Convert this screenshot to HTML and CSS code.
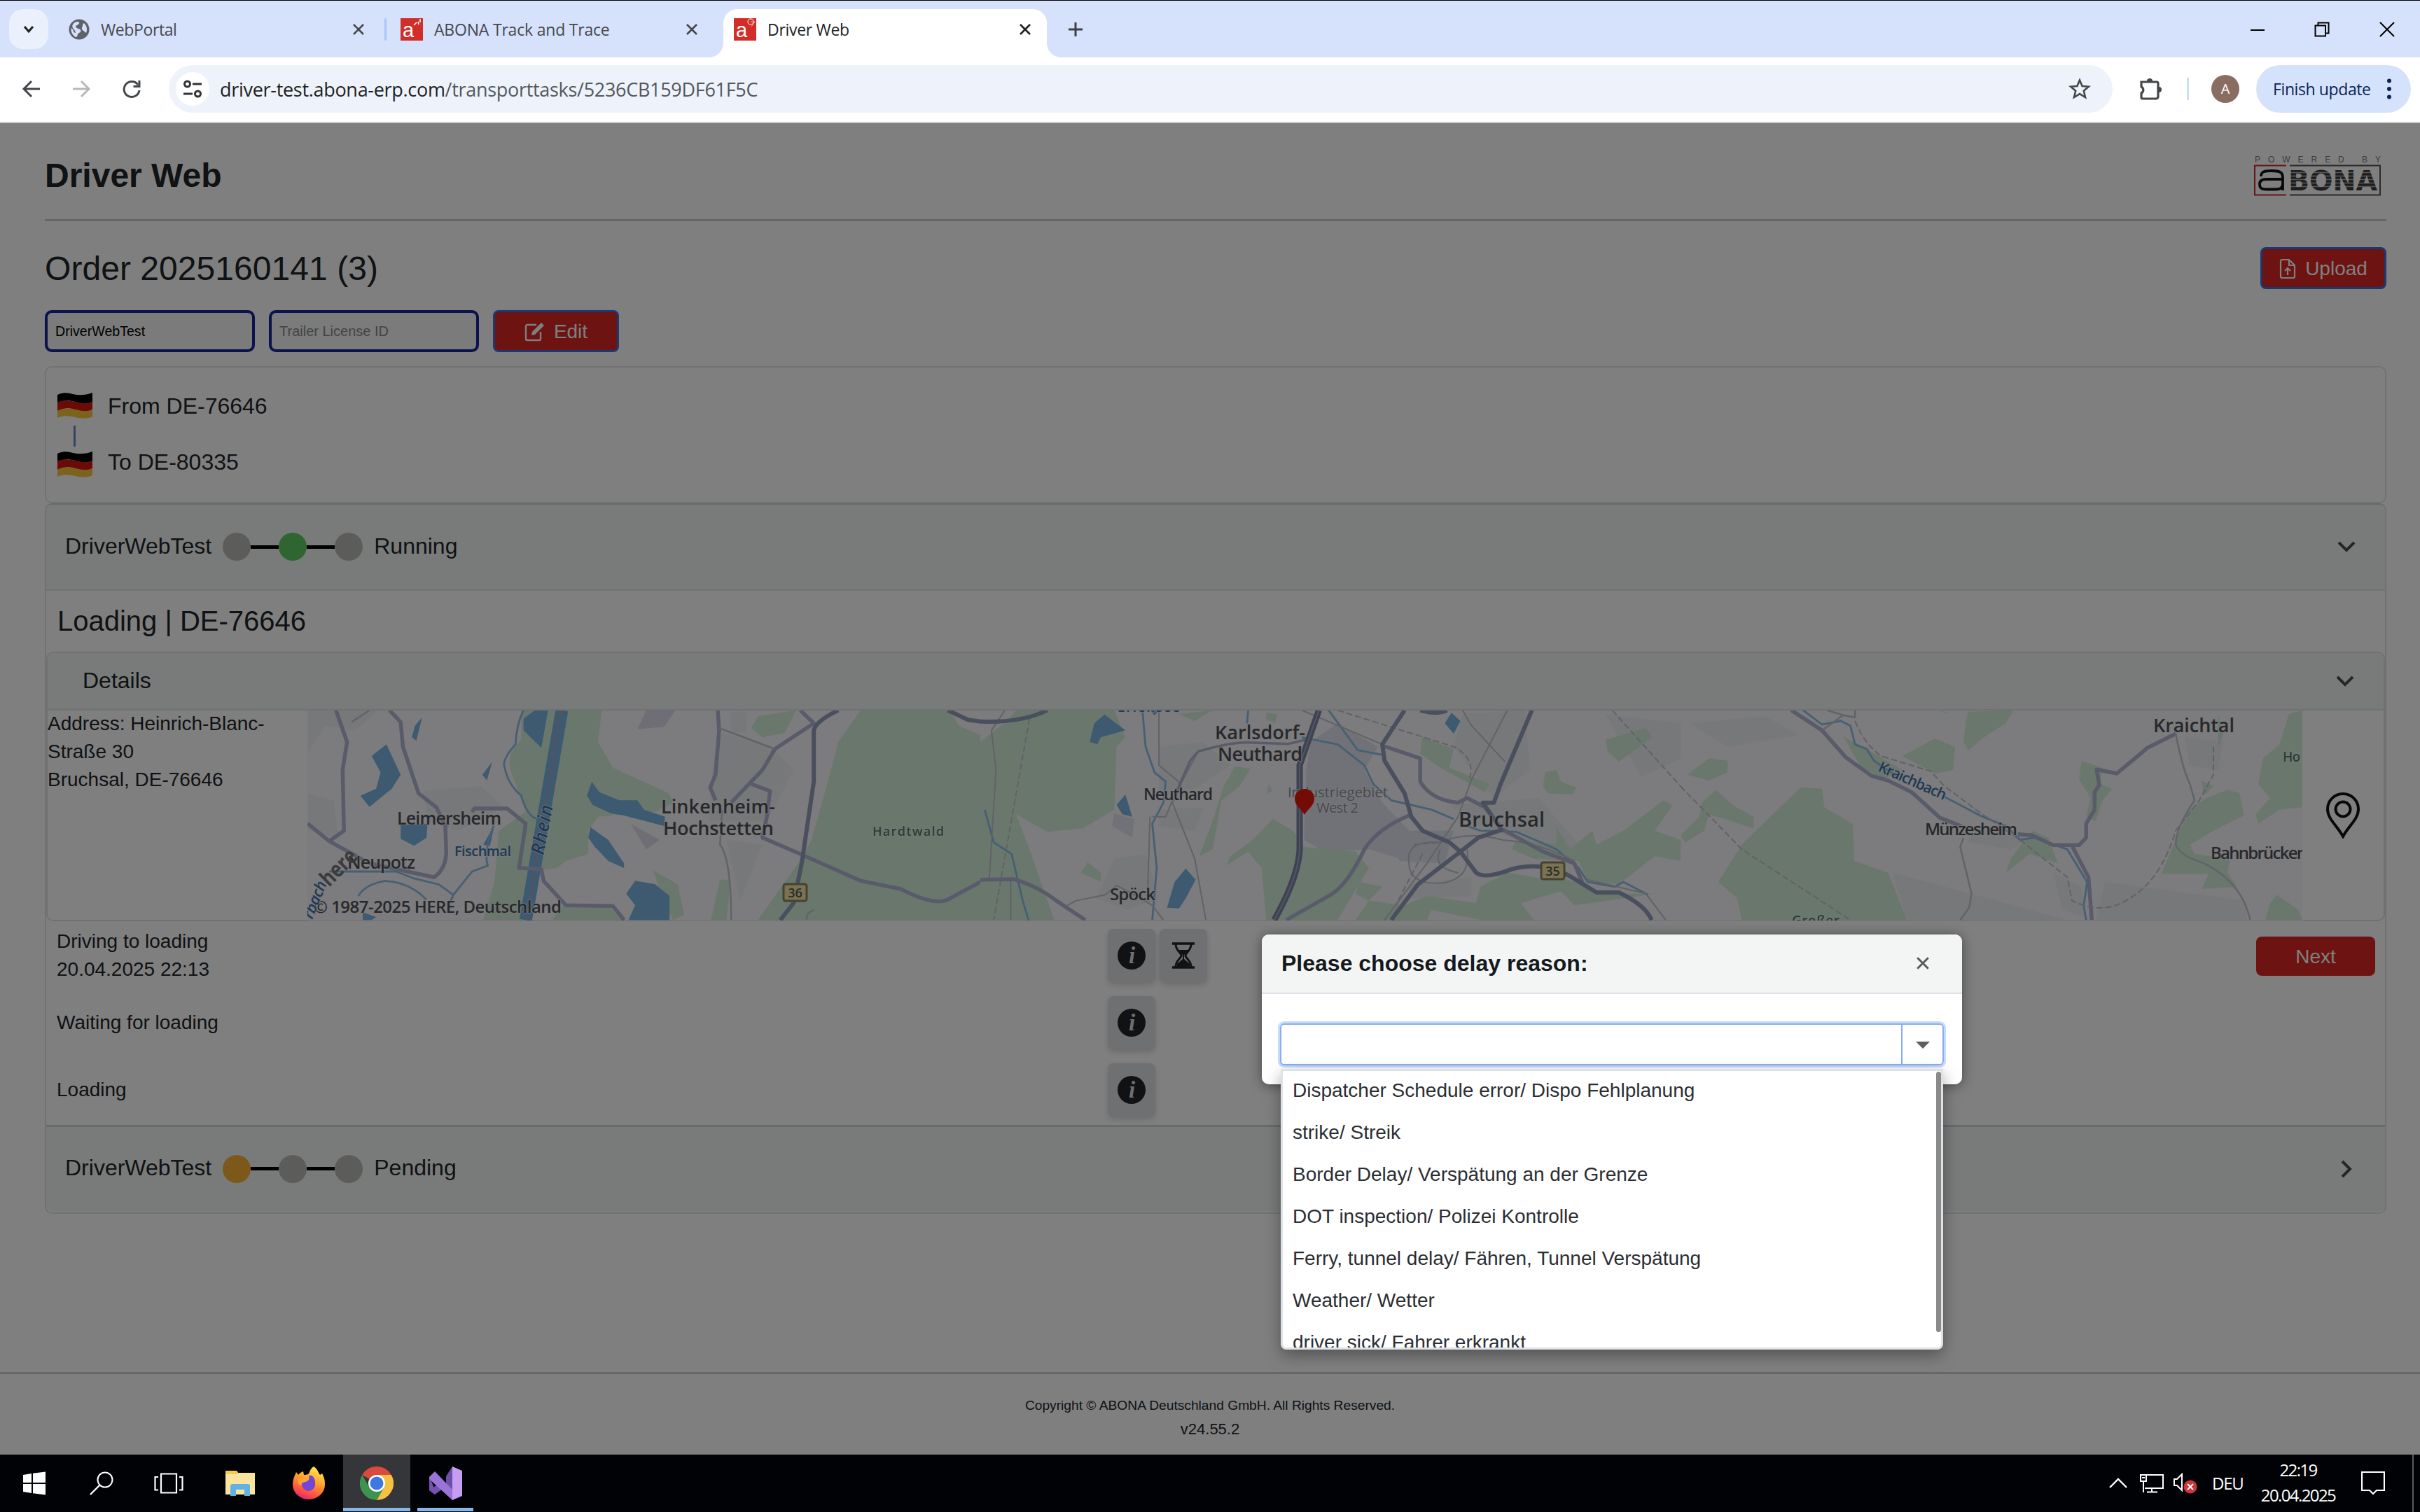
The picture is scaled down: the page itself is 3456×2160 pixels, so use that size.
FILE: index.html
```html
<!DOCTYPE html>
<html lang="en">
<head>
<meta charset="utf-8">
<title>Driver Web</title>
<link rel="stylesheet" href="styles.css">
</head>
<body>
<svg class="defs" width="0" height="0" aria-hidden="true">
  <defs>
    <symbol id="i-close" viewBox="0 0 18 18"><path d="M2 2L16 16M16 2L2 16" fill="none" stroke="currentColor" stroke-width="2.6"/></symbol>
    <symbol id="i-info" viewBox="0 0 40 40"><circle cx="20" cy="20" r="20" fill="#212529"/><text x="20.5" y="31" text-anchor="middle" font-family="Liberation Serif" font-style="italic" font-weight="bold" font-size="33" fill="#dcdee0">i</text></symbol>
    <symbol id="i-flag" viewBox="0 0 50 38">
      <path d="M0 4C8 0 14 1 22 3S40 5 50 1V14C42 18 34 17 25 14S8 12 0 15Z" fill="#000"/>
      <path d="M0 15C8 11 16 12 25 14S42 18 50 14V25C42 29 34 28 25 25S8 23 0 27Z" fill="#d6170f"/>
      <path d="M0 27C8 23 16 23 25 25S42 29 50 25V35C42 39 34 38 25 36S8 33 0 37Z" fill="#f7c63a"/>
    </symbol>
    <symbol id="i-down" viewBox="0 0 28 28"><path d="M3 8L14 19L25 8" fill="none" stroke="#4a4d50" stroke-width="4"/></symbol>
    <symbol id="i-right" viewBox="0 0 28 28"><path d="M8 3L19 14L8 25" fill="none" stroke="#4a4d50" stroke-width="4"/></symbol>
  </defs>
</svg>

<div class="browser">
  <div class="tabstrip">
    <div class="tabsearch"><svg width="16" height="12" viewBox="0 0 16 12"><path d="M2 2L8 9L14 2" fill="none" stroke="#1f1f1f" stroke-width="3"/></svg></div>
    <div class="tab tab-one">
      <svg width="30" height="30" viewBox="0 0 30 30"><circle cx="15" cy="15" r="14.5" fill="#5f6368"/><path d="M13 4C17 4 15 8 12 9S10 13 14 14S19 18 15 20S14 26 10 26C4 22 3 17 4 13C8 16 6 20 10 20C10 15 3 13 6 8C8 5 10 4 13 4ZM22 6C26 10 27 15 25 20C22 17 18 16 19 12C21 10 19 8 22 6Z" fill="#d6e1fb"/></svg>
      <span class="tab-title t1">WebPortal</span>
      <svg class="tab-x" width="18" height="18"><use href="#i-close"/></svg>
    </div>
    <div class="tab-sep"></div>
    <div class="tab tab-two">
      <span class="favicon">a<svg width="14" height="14" viewBox="0 0 14 14"><path d="M2 10L6 6M8 5L9 9M11 1V6" stroke="#fff" stroke-width="1.6"/></svg></span>
      <span class="tab-title t2">ABONA Track and Trace</span>
      <svg class="tab-x" width="18" height="18"><use href="#i-close"/></svg>
    </div>
    <div class="tab tab-three">
      <span class="favicon">a<svg width="14" height="14" viewBox="0 0 14 14"><circle cx="7" cy="5" r="4" fill="none" stroke="#f3b7b3" stroke-width="1.4"/><path d="M7 5L13 5L8 12" fill="none" stroke="#f3b7b3"/></svg></span>
      <span class="tab-title t3">Driver Web</span>
      <svg class="tab-x" width="18" height="18"><use href="#i-close"/></svg>
    </div>
    <svg class="newtab" width="22" height="22" viewBox="0 0 22 22"><path d="M11 1V21M1 11H21" stroke="#3c4043" stroke-width="3"/></svg>
    <div class="wincontrols">
      <svg width="20" height="22" viewBox="0 0 20 22"><path d="M0 12H20" stroke="#000" stroke-width="2"/></svg>
      <svg width="22" height="22" viewBox="0 0 22 22"><path d="M1.500 5.500H16V20.500H1.500ZM5.500 5V1.500H20.500V16.500H16.500" fill="none" stroke="#000" stroke-width="2"/></svg>
      <svg width="22" height="22" viewBox="0 0 22 22"><path d="M1 1L21 21M21 1L1 21" stroke="#000" stroke-width="2"/></svg>
    </div>
  </div>

  <div class="toolbar">
    <svg class="nav" width="28" height="28" viewBox="0 0 28 28"><path d="M26 14H3M14 3L3 14L14 25" fill="none" stroke="#44474a" stroke-width="3"/></svg>
    <svg class="nav nav-fwd" width="28" height="28" viewBox="0 0 28 28"><path d="M2 14H25M14 3L25 14L14 25" fill="none" stroke="#b6b8ba" stroke-width="3"/></svg>
    <svg class="nav nav-reload" width="28" height="28" viewBox="0 0 28 28"><path d="M23 8A11 11 0 1 0 25 16" fill="none" stroke="#44474a" stroke-width="3"/><path d="M25 2V10.500H16.500" fill="none" stroke="#44474a" stroke-width="3"/></svg>
    <div class="omnibox">
      <div class="siteinfo"><svg width="28" height="26" viewBox="0 0 28 26"><g fill="none" stroke="#303336" stroke-width="3"><circle cx="6.500" cy="6" r="4"/><path d="M14 6H27M1 20H14"/><circle cx="21.500" cy="20" r="4"/></g></svg></div>
      <div class="url"><b>driver-test.abona-erp.com</b>/transporttasks/5236CB159DF61F5C</div>
      <svg class="star" width="32" height="32" viewBox="0 0 32 32"><path d="M16 3.500L19.600 12L28.800 12.800L21.800 18.800L24 28L16 23.100L8 28L10.200 18.800L3.200 12.800L12.400 12Z" fill="none" stroke="#44474a" stroke-width="2.600"/></svg>
    </div>
    <svg class="puzzle" width="34" height="34" viewBox="0 0 34 34"><path d="M4 7H26A2 2 0 0 1 28 9V28A3 3 0 0 1 25 31H6A2 2 0 0 1 4 29V23A5 5 0 0 0 4 14Z" fill="none" stroke="#44474a" stroke-width="3.200"/><path d="M12 6A4 4 0 0 1 20 6ZM29 14A4 4 0 0 1 29 22Z" fill="#44474a"/></svg>
    <div class="tool-sep"></div>
    <div class="avatar">A</div>
    <div class="update"><span>Finish update</span><svg width="6" height="30" viewBox="0 0 6 30"><g fill="#0b2357"><circle cx="3" cy="3.500" r="3"/><circle cx="3" cy="15" r="3"/><circle cx="3" cy="26.500" r="3"/></g></svg></div>
  </div>

  <div class="page">
    <header class="head">
      <h1>Driver Web</h1>
      <svg class="logo" width="184" height="60" viewBox="3218 221 184 60">
        <text x="3220" y="232" font-family="Liberation Sans" font-size="12" fill="#777" textLength="180">POWERED BY</text>
        <path d="M3265 236.500H3220V278.500H3265" fill="none" stroke="#c4302c" stroke-width="2"/>
        <path d="M3270 236.500H3399V278.500H3270" fill="none" stroke="#555" stroke-width="2"/>
        <path d="M3229 252C3229 245 3234 244 3244 244C3256 244 3260 246 3260 254V272M3260 256H3237C3229 256 3227 259 3227 263C3227 269 3230 270.500 3237 270.500H3250C3257 270.500 3260 267 3260 263" fill="none" stroke="#111" stroke-width="3.800"/>
        <text x="3268" y="271.500" font-family="DejaVu Sans" font-weight="bold" font-size="39.500" fill="#3c3c3c" textLength="127" lengthAdjust="spacingAndGlyphs">BONA</text>
        <path d="M3268 246.500H3396M3268 251.500H3396M3268 256.500H3396M3268 261.500H3396M3268 266.500H3396" stroke="#fff" stroke-opacity=".6" stroke-width="1.500"/>
      </svg>
    </header>
    <div class="order">
      <h2>Order 2025160141 (3)</h2>
      <button class="btn btn-outline btn-upload"><svg width="24" height="30" viewBox="0 0 24 30"><path d="M14 2H4A2 2 0 0 0 2 4V26A2 2 0 0 0 4 28H20A2 2 0 0 0 22 26V10ZM14 2V10H22M12 24V14M8 18L12 14L16 18" fill="none" stroke="currentColor" stroke-width="2.200"/></svg>Upload</button>
    </div>
    <div class="licenses">
      <div class="field">DriverWebTest</div>
      <div class="field field-empty">Trailer License ID</div>
      <button class="btn btn-outline btn-edit"><svg width="30" height="28" viewBox="0 0 30 28"><path d="M17 4H4A2 2 0 0 0 2 6V24A2 2 0 0 0 4 26H21A2 2 0 0 0 23 24V14" fill="none" stroke="currentColor" stroke-width="2.400"/><path d="M10 19L11 14L24 1L28 5L15 18Z" fill="currentColor"/></svg>Edit</button>
    </div>
    <section class="route">
      <div class="stop"><svg width="50" height="38"><use href="#i-flag"/></svg>From DE-76646</div>
      <div class="route-line"></div>
      <div class="stop stop-to"><svg width="50" height="38"><use href="#i-flag"/></svg>To DE-80335</div>
    </section>
    <section class="tours">
      <div class="tour-head">
        <span>DriverWebTest</span>
        <div class="steps"><i class="dot"></i><i class="bar"></i><i class="dot dot-run"></i><i class="bar"></i><i class="dot"></i></div>
        <span>Running</span>
        <svg class="chev" width="28" height="28"><use href="#i-down"/></svg>
      </div>
      <h3>Loading | DE-76646</h3>
      <div class="details">
        <div class="details-head"><span>Details</span><svg class="chev" width="28" height="28"><use href="#i-down"/></svg></div>
        <div class="details-body">
          <div class="address">Address: Heinrich-Blanc-<br>Straße 30<br>Bruchsal, DE-76646</div>
          <svg class="map" width="2849" height="300" viewBox="439 1015 2849 300">
            <rect x="439" y="1015" width="2849" height="300" fill="#f8f7fa"/>
            <!-- west: Rhine valley to Hardtwald -->
            <g class="tile" transform="translate(400 1000) scale(.6378 .3333)">
              <path class="town" d="M62 44H220L170 130L100 110L62 230ZM62 400L120 430L130 590L62 560ZM320 390L450 370L500 460L400 560L330 520ZM990 140L1100 200L1150 300L1090 520H960L970 250ZM1000 600L1080 620L1030 860ZM1010 50H1045V140H1010Z"/>
              <path class="wood" d="M540 170Q500 240 520 320L550 480L490 560L480 780L455 943H560L640 44H540ZM640 44H720L712 180L745 290L870 400L880 440L840 480L712 500L690 560V660L640 690L620 720L580 730ZM1300 44H1500L1520 110L1568 150V943H1070L1160 700L1190 600L1225 360L1250 180ZM1070 70L1155 44L1130 140L1080 160L1055 120ZM835 730L890 790L905 920L880 943L860 860ZM985 770H1008L1000 943H965ZM630 885L740 890L765 943H610Z"/>
              <path class="mauve" d="M820 44H885L860 115L800 125ZM785 530L850 600L820 640Z"/>
              <path class="water" d="M600 44L585 205L545 130L545 80L570 44ZM318 75L305 175L295 160L302 110ZM238 190L270 320L250 380L200 458L180 410L215 380L225 310L205 240ZM475 265L463 345L453 320ZM698 350L715 395L760 430H800L815 470L862 500L860 540L800 510L770 495L740 485L700 450L687 410ZM695 545L735 600L770 700V720L735 690L705 630L690 590ZM270 535L330 530L328 590L300 625L270 595ZM795 775L840 790L872 840V943H780L795 880L775 830ZM185 910L215 930L205 943H185ZM480 535L470 625L455 620Z"/>
              <path d="M631 44L550 943" stroke="#7bb5e0" stroke-width="18"/>
              <path d="M629 44L552 943" stroke="#d894a8" stroke-width="2" stroke-dasharray="7 5"/>
              <path class="brook" d="M545 44Q530 100 527 190Q495 260 503 290Q510 360 540 410Q555 510 580 510M478 540Q455 650 465 710L430 735L388 835L355 790L300 765L260 735H110M175 840Q190 790 235 775Q290 780 327 855M388 835L380 870"/>
              <path class="road" d="M125 44L150 180L140 300L143 560L110 605L62 530M110 605L200 700L345 760Q372 720 372 650L370 540L350 460L310 400L275 200L270 95L245 44M430 480L435 465H508L550 530L535 720L585 725L590 775L640 880L745 883L770 943M980 44L983 130L975 320L963 375L975 430M1165 44L1195 100L1108 210L1080 300L1010 440M1055 360L1097 390L1090 500L1080 590L1165 660L1300 775L1390 810Q1470 890 1500 850L1568 780"/>
              <path class="road-thin" d="M983 120L1108 210M990 470L985 620Q1010 680 1010 943M1195 900Q1175 915 1180 943M200 44L160 95"/>
              <path class="highway" d="M1250 44Q1200 90 1195 130L1195 350L1168 700L1150 870L1120 943M1495 44L1540 85L1568 92"/>
            </g>
            <!-- centre: Neuthard to Bruchsal -->
            <g class="tile" transform="translate(1400 1000) scale(.6378 .3333)">
              <path class="town" d="M400 200L500 180L560 280L450 420L400 400ZM300 680L370 660L400 850L330 900L260 850ZM1080 60L1220 44L1230 300L1150 420L1060 200ZM1050 450L1250 420L1350 640L1230 620L1120 540ZM400 470L500 460L480 560L400 540ZM0 640L80 700L60 943H0ZM960 790L1100 760L1100 840L960 850ZM1400 60L1568 100V250L1480 330Z"/>
              <path class="indus" d="M740 180L800 100L890 200L860 300L900 440L960 560L940 680L870 640L770 650L725 600L730 300ZM880 560L1060 560L1040 700L940 690ZM300 485L345 510L340 590L295 540ZM0 790L40 780L30 943H0Z"/>
              <path class="wood" d="M80 44H300L325 160L305 200L300 470L230 550L150 565L80 490L110 640L165 943H0V180L60 90ZM445 60L520 44L480 90ZM570 285L605 295L580 370L540 430L520 640L490 670L520 520L545 370ZM655 510L700 560L725 630L840 650L870 720L800 943H640L630 720L600 650L550 710L560 670L610 600ZM990 160L1060 210L1050 290L1140 360L1130 395L1030 290L985 230ZM640 55L665 60L660 98L640 85ZM1400 170L1490 120L1505 160L1430 265L1405 220ZM1265 310L1290 300L1300 350L1335 375L1325 405L1270 400L1260 370ZM1290 545L1320 640L1370 560L1380 620L1440 560L1530 430L1550 450L1510 560L1568 600V690L1510 670L1430 790L1360 780L1340 690L1240 680L1190 640L1200 600L1290 620ZM870 860L950 880L1000 840L1110 870L1120 800L1180 740L1270 770L1300 760L1400 830L1510 830L1440 850L1330 880L1300 820L1210 870L1240 943H1120L1010 900L1000 943H840ZM850 780L900 800L870 860L840 830ZM240 695L270 740V780L225 740ZM645 360L655 390L642 400Z"/>
              <path class="water" d="M278 62L325 130L270 160L262 190L245 180L255 100ZM325 405L340 500L318 490L305 450ZM460 722L482 770L460 850L445 893L418 890L435 780ZM1055 55L1075 90L1060 145L1040 100ZM380 44H400L390 66Z"/>
              <path class="brook" d="M363 44L370 200L390 310L415 350L410 440L385 530L395 720L385 943M10 470L30 610L70 660L95 860L108 943M600 44L597 100M720 160L800 190L860 280L880 360L920 430L1010 470L1060 510M780 44L845 215L900 235M1090 540L1120 560L1200 565L1290 640L1340 720L1360 780L1420 800L1440 780L1495 835"/>
              <path class="rail" d="M55 44L25 130L35 300L20 770M68 770V943M400 44L400 280L450 360L430 440L480 680L505 943M488 220L440 390M385 500H415L430 430M380 500L375 800M195 880L215 860L280 835L305 795L350 840L385 880L410 943M720 44L900 190M1080 44L1100 110L1175 265M1180 44L1100 340L1070 500L1000 700L905 943M1360 770L1490 830L1535 943M960 700Q950 600 1030 610Q1090 560 1170 600Q1250 610 1330 690M960 700Q960 790 1030 785Q1100 770 1090 640M1030 640Q1010 720 1070 740"/>
              <path class="rail dashed" d="M110 80L30 943M800 44L1060 200Q1110 250 1095 340M1415 44L1568 370M970 620L1030 610M990 660L930 880"/>
              <path class="road" d="M0 770L75 768Q130 800 170 860L235 943M900 195L985 250V350Q1010 430 1070 440L1090 420L1130 460L1165 550L1260 650L1330 700L1350 790M960 495Q890 550 860 640Q820 800 780 840L685 943"/>
              <path class="road road-mid" d="M440 390L470 260L488 220Q560 180 600 182L690 188L740 165"/>
              <path class="highway" d="M0 92Q90 100 150 44M950 44L900 190L905 260L950 400L965 500L990 560L1050 610L1075 650L1110 740Q1130 770 1190 725Q1260 690 1320 755L1380 825H1430Q1490 880 1503 943M1170 555L1115 590L1075 650L980 790L920 943M1235 44L1165 360L1150 440L1125 440L1165 550M985 44Q1020 65 1045 44"/>
              <path d="M758 44L715 280V640Q712 760 658 943" stroke="#7c85a6" stroke-width="9"/>
              <path d="M758 44L715 280V640Q712 760 658 943" stroke="#a4abc4" stroke-width="2"/>
            </g>
            <!-- east: Kraichbach valley -->
            <g class="tile" transform="translate(2400 1000) scale(.6735 .3333)">
              <path class="town" d="M1070 160L1150 180L1140 300L1080 280ZM620 540L740 590L700 640L610 610ZM790 740L850 800L860 930L810 900ZM20 100L180 70L250 150L100 200ZM450 740L820 943H480ZM900 780L1200 860V943H880Z"/>
              <path class="wood" d="M610 50L705 44L690 100L650 150L610 215L600 180L605 90ZM540 165L582 200L578 300L540 315L470 240ZM345 155L420 240L470 300L430 340L380 280ZM60 250L100 260V310L60 345L15 320ZM75 385L110 450L155 500V550L60 490L50 560L10 610L0 580L40 500L45 440ZM255 375L300 380L305 460L365 530L368 690L440 740L480 943H130L120 850L80 780L130 620L180 520ZM850 262L895 290L890 360L915 380L895 430L880 520L860 500L870 420L845 340ZM1160 385L1185 400L1195 495L1130 560L1080 620L1090 660L1165 680L1160 740L1180 800L1105 810L1120 745H1020L1050 600L1080 470L1115 420ZM1290 60L1318 44V460L1270 470L1225 530L1220 490L1250 420L1225 360L1235 250L1270 190ZM1265 835L1310 900L1318 943H1240L1250 870ZM745 560L780 590L800 700L740 660L690 740L700 680ZM1140 60L1150 150L1140 210ZM1105 345L1130 370L1110 410ZM550 44L575 60L560 55Z"/>
              <path class="brook" d="M260 44L300 105L340 90L360 110L370 190L395 210L410 260L460 330M555 410L640 500L690 540L720 600L750 590L820 640L862 780L855 880L860 943"/>
              <path class="road" d="M235 44L300 130L350 245L405 325L440 345L490 395L550 505L595 540M715 575L745 580L790 622H845L860 590V530L878 470V395L888 365L882 298L925 315L990 205L1050 145M830 625L865 760L872 943"/>
              <path class="road-thin" d="M300 130L345 65L370 75V44M310 44L345 65M1050 145Q1065 300 1080 360L1090 430Q1050 550 1050 620Q1060 670 1110 700Q1190 780 1208 943M600 590L593 630L617 830L612 890L593 943"/>
              <path class="rail dashed" d="M370 90Q390 190 425 240L530 305L560 370L640 490L720 600L820 760L830 860Q900 930 960 840Q1020 760 1050 560L1100 430L1130 320V200M0 370L130 640L360 943"/>
            </g>
            <g class="label">
              <text x="567" y="1178" font-size="25" textLength="149">Leimersheim</text>
              <text x="496" y="1241" font-size="25" textLength="97">Neupotz</text>
              <text x="944" y="1162" font-size="27" textLength="163">Linkenheim-</text>
              <text x="947" y="1193" font-size="27" textLength="158">Hochstetten</text>
              <text x="448" y="1304" font-size="24" textLength="354">© 1987-2025 HERE, Deutschland</text>
              <text x="1735" y="1056" font-size="27" textLength="129">Karlsdorf-</text>
              <text x="1739" y="1087" font-size="27" textLength="121">Neuthard</text>
              <text x="1633" y="1143" font-size="23" textLength="99">Neuthard</text>
              <text x="2083" y="1181" font-size="29" textLength="123">Bruchsal</text>
              <text x="1585" y="1286" font-size="24" textLength="65">Spöck</text>
              <text x="3075" y="1046" font-size="27" textLength="116">Kraichtal</text>
              <text x="2749" y="1193" font-size="24" textLength="132">Münzesheim</text>
              <text x="3157" y="1227" font-size="24" textLength="138">Bahnbrücken</text>
            </g>
            <g class="label label-grey">
              <text x="1839" y="1139" font-size="20.500" textLength="143">Industriegebiet</text>
              <text x="1880" y="1161" font-size="20.500" textLength="60">West 2</text>
            </g>
            <g class="label label-green">
              <text x="1246" y="1194" font-size="18" textLength="102">Hardtwald</text>
              <text x="3260" y="1088" font-size="19" textLength="25">Ho</text>
              <text x="2559" y="1322" font-size="19" textLength="68">Großer</text>
            </g>
            <g class="label label-blue">
              <text x="649" y="1223" font-size="20" textLength="81">Fischmal</text>
              <text x="1596" y="1016.500" font-size="19" textLength="89">Erlensee</text>
              <text transform="translate(776 1222) rotate(-79)" font-size="26" font-style="italic" textLength="72">Rhein</text>
              <text transform="translate(2681 1101) rotate(24)" font-size="21" textLength="104">Kraichbach</text>
              <text transform="translate(446 1314) rotate(-68)" font-size="22" font-style="italic" textLength="56">rbach</text>
            </g>
            <text transform="translate(470 1268) rotate(-45)" font-family="Open Sans" font-size="32" font-weight="bold" fill="#777" textLength="60" lengthAdjust="spacingAndGlyphs">here</text>
            <g class="shield">
              <rect x="1119" y="1263" width="33" height="24" rx="3"/><text x="1135.500" y="1282">36</text>
              <rect x="2201" y="1232" width="33" height="24" rx="3"/><text x="2217.500" y="1251">35</text>
            </g>
            <path d="M1863 1164C1858 1155 1849 1151 1849 1141A14 14 0 0 1 1877 1141C1877 1151 1868 1155 1863 1164Z" fill="#e8190c"/>
          </svg>
          <div class="locate"><svg width="50" height="66" viewBox="0 0 50 66"><path d="M25 63C17 48 3 38 3 24A22 22 0 0 1 47 24C47 38 33 48 25 63Z" fill="none" stroke="#111" stroke-width="4"/><circle cx="25" cy="24" r="10.500" fill="none" stroke="#111" stroke-width="4"/></svg></div>
        </div>
      </div>
      <div class="tasks">
        <div class="task">
          <div class="task-name"><span>Driving to loading</span><span>20.04.2025 22:13</span></div>
          <div class="task-actions"><div class="icon-btn"><svg width="40" height="40"><use href="#i-info"/></svg></div><div class="icon-btn"><svg width="32" height="38" viewBox="0 0 32 38"><path d="M0 2H32M0 36H32" stroke="#212529" stroke-width="3.600"/><path d="M5 3C5 12 13 15 13 19S5 26 5 35M27 3C27 12 19 15 19 19S27 26 27 35" fill="none" stroke="#212529" stroke-width="3"/><path d="M7 11H25L17 18V24L25 31V36H7V31L15 24V18Z" fill="#212529"/></svg></div></div>
          <button class="btn btn-next">Next</button>
        </div>
        <div class="task">
          <div class="task-name"><span>Waiting for loading</span></div>
          <div class="task-actions"><div class="icon-btn"><svg width="40" height="40"><use href="#i-info"/></svg></div></div>
        </div>
        <div class="task">
          <div class="task-name"><span>Loading</span></div>
          <div class="task-actions"><div class="icon-btn"><svg width="40" height="40"><use href="#i-info"/></svg></div></div>
        </div>
      </div>
      <div class="tour-head tour-last">
        <span>DriverWebTest</span>
        <div class="steps"><i class="dot dot-wait"></i><i class="bar"></i><i class="dot"></i><i class="bar"></i><i class="dot"></i></div>
        <span>Pending</span>
        <svg class="chev" width="28" height="28"><use href="#i-right"/></svg>
      </div>
    </section>
    <footer class="foot"><div class="copy">Copyright © ABONA Deutschland GmbH. All Rights Reserved.</div><div class="version">v24.55.2</div></footer>

    <div class="backdrop"></div>
    <div class="dialog">
      <div class="dialog-head"><span>Please choose delay reason:</span><svg width="20" height="20"><use href="#i-close"/></svg></div>
      <div class="dialog-body">
        <div class="combo"><div class="combo-arrow"><svg width="20" height="10" viewBox="0 0 20 10"><path d="M0 0H20L10 10Z" fill="#5c5f62"/></svg></div></div>
      </div>
      <div class="options">
        <div>Dispatcher Schedule error/ Dispo Fehlplanung</div>
        <div>strike/ Streik</div>
        <div>Border Delay/ Verspätung an der Grenze</div>
        <div>DOT inspection/ Polizei Kontrolle</div>
        <div>Ferry, tunnel delay/ Fähren, Tunnel Verspätung</div>
        <div>Weather/ Wetter</div>
        <div>driver sick/ Fahrer erkrankt</div>
        <i class="thumb"></i>
      </div>
    </div>
  </div>
</div>

<div class="taskbar">
  <div class="app"><svg width="34" height="34" viewBox="0 0 34 34"><path d="M1 5L13 3V16H1ZM15 2.700L33 0.500V16H15ZM1 18H13V31L1 29ZM15 18H33V33.500L15 31.300Z" fill="#fff"/></svg></div>
  <div class="app"><svg width="34" height="34" viewBox="0 0 34 34"><circle cx="22" cy="12" r="10.500" fill="none" stroke="#fff" stroke-width="2"/><path d="M14.500 19.500L1 33" stroke="#fff" stroke-width="2.400"/></svg></div>
  <div class="app"><svg width="42" height="30" viewBox="0 0 42 30"><path d="M10 1.500H32V28.500H10ZM6 6H1.500V24.500H6M36 6H40.500V24.500H36" fill="none" stroke="#fff" stroke-width="2.200"/></svg></div>
  <div class="app app-folder"><svg width="44" height="38" viewBox="0 0 44 38"><path d="M1 1H17L19 4H43V35H1Z" fill="#fbe49b"/><path d="M1 1H17L19 6H1Z" fill="#f5cb4e"/><path d="M8 37V23A3 3 0 0 1 11 20H33A3 3 0 0 1 36 23V37H28V28H16V37Z" fill="#5fb2e3"/></svg></div>
  <div class="app app-fox"><svg width="48" height="48" viewBox="0 0 48 48"><defs><linearGradient id="ff" x1=".7" y1="0" x2=".3" y2="1"><stop offset="0" stop-color="#fff04c"/><stop offset=".45" stop-color="#ff9a2b"/><stop offset=".8" stop-color="#ff4a45"/><stop offset="1" stop-color="#e0217c"/></linearGradient></defs><path d="M31 0C37 4 37 8 40 12L43 10C47 17 47 22 47 26A23 21 0 0 1 1 26C1 18 4 13 6 8L9 12C11 9 14 8 16 7L17 12C22 12 24 11 25 8S27 3 31 0Z" fill="url(#ff)"/><path d="M24 13C31 11 34 20 33 26A9.500 9 0 0 1 14 26C14 23 15 21 18 22C22 22 26 19 24 13Z" fill="#7445d6"/><path d="M8 18C13 15 18 17 23 18C22 22 18 22 16 23C12 24 14 27 12 27C9 25 8 22 8 18Z" fill="#ffa436"/></svg></div>
  <div class="app app-active"><svg width="48" height="48" viewBox="0 0 48 48"><path d="M24 24L3.200 12A24 24 0 0 1 44.800 12H24Z" fill="#d94b3c"/><path d="M24 12H44.800A24 24 0 0 1 24 48L34 30Z" fill="#f6c143"/><path d="M3.200 12A24 24 0 0 0 24 48L34.400 30H13.600Z" fill="#3f9350"/><circle cx="24" cy="24" r="12" fill="#fff"/><circle cx="24" cy="24" r="9.500" fill="#3d79e0"/></svg></div>
  <div class="app app-vs"><svg width="48" height="48" viewBox="0 0 48 48"><path d="M34 0L40 3V44L34 48L25 34V14Z" fill="#6c4fa8"/><path d="M34 0L48 6V42L34 48Z" fill="#c79df2"/><path d="M1 14L9 33V40L1 34Z" fill="#7352b0"/><path d="M1 34L8 29L14 25L20 32L9 40Z" fill="#7352b0"/><path d="M1 15L9 7L34 33V48L1 18Z" fill="#9a74d6"/></svg></div>
  <div class="tray">
    <svg class="tr-up" width="26" height="16" viewBox="0 0 26 16"><path d="M1 14L13 2L25 14" fill="none" stroke="#fff" stroke-width="2.400"/></svg>
    <svg class="tr-net" width="34" height="28" viewBox="0 0 34 28"><path d="M9 2H33V21H7M5 12V27M17 21V26M10 26.500H25M1 2H9V11H1ZM3 6H7" fill="none" stroke="#fff" stroke-width="2"/></svg>
    <svg class="tr-vol" width="34" height="30" viewBox="0 0 34 30"><path d="M1 9H5L12 2V25L5 18H1Z" fill="none" stroke="#fff" stroke-width="2"/><circle cx="24" cy="20" r="9.500" fill="#d13438"/><path d="M20 16L28 24M28 16L20 24" stroke="#fff" stroke-width="2"/></svg>
    <span class="lang">DEU</span>
    <div class="clock"><span>22:19</span><span class="date">20.04.2025</span></div>
    <svg class="tr-note" width="34" height="34" viewBox="0 0 34 34"><path d="M1 1H33V27H22L17 32L12 27H1Z" fill="none" stroke="#fff" stroke-width="2.200"/></svg>
    <i class="desk"></i>
  </div>
</div>
</body>
</html>
```
FILE: styles.css
```css
* { box-sizing: border-box; }
body { margin: 0; width: 3456px; height: 2160px; overflow: hidden; background: #000; font-family: "Liberation Sans", Arial, sans-serif; color: #212529; }
svg { display: block; flex: none; }
.defs { position: absolute; }
.browser { height: 2078px; padding-top: 1px; display: flex; flex-direction: column; }

/* tab strip */
.tabstrip { height: 81px; background: #d6e1fb; display: flex; align-items: flex-start; padding: 12px 36px 0 13px; font-family: "Open Sans", "Noto Sans", sans-serif; font-size: 23px; color: #45484c; }
.tabsearch { width: 56px; height: 57px; border-radius: 20px; background: #eaf1fd; display: flex; align-items: center; justify-content: center; }
.tab { height: 69px; display: flex; align-items: flex-start; padding-top: 13px; }
.tab-title { line-height: 32px; white-space: nowrap; flex: none; }
.tab-x { margin: 7px 0 0 auto; color: #44474a; }
.tab-one { width: 453px; margin-left: 29px; }
.tab-one > svg:first-child { margin-top: 1px; }
.tab-one .tab-x, .tab-two .tab-x { margin-right: 30px; }
.t1 { margin-left: 16px; letter-spacing: -.4px; }
.t2 { margin-left: 16px; letter-spacing: -.2px; }
.t3 { margin-left: 16px; letter-spacing: -.3px; color: #1f1f1f; }
.tab-sep { width: 3px; height: 32px; margin: 13px 0 0 -2px; background: #a8c7fa; border-radius: 2px; }
.tab-two { width: 455px; margin-left: 20px; }
.favicon { width: 32px; height: 32px; background: #d22d28; color: #fff; font: 29px/35px "Liberation Sans", sans-serif; padding-left: 3px; display: flex; }
.favicon svg { margin-left: -2px; }
.tab-three { width: 462px; height: 69px; margin-left: 6px; padding: 13px 22px 0 15px; background: #fff; border-radius: 20px 20px 0 0; position: relative; }
.tab-three::before, .tab-three::after { content: ""; position: absolute; bottom: 0; width: 20px; height: 20px; }
.tab-three::before { left: -20px; background: radial-gradient(circle at 0 0, transparent 19.500px, #fff 20px); }
.tab-three::after { right: -20px; background: radial-gradient(circle at 100% 0, transparent 19.500px, #fff 20px); }
.tab-three .tab-x { color: #1f1f1f; }
.newtab { margin: 18px 0 0 30px; }
.wincontrols { margin: 18px 0 0 auto; display: flex; gap: 71px; }

/* toolbar */
.toolbar { height: 94px; flex: none; background: #fff; border-bottom: 2px solid #c9cbcd; display: flex; align-items: center; padding: 0 13px 2px 31px; font-family: "Open Sans", "Noto Sans", sans-serif; }
.nav-fwd { margin-left: 43px; }
.nav-reload { margin-left: 44px; }
.omnibox { width: 2776px; height: 68px; margin-left: 39px; border-radius: 34px; background: #edf2fb; display: flex; align-items: center; padding: 0 31px 0 10px; }
.siteinfo { width: 48px; height: 48px; border-radius: 24px; background: #fff; display: flex; align-items: center; justify-content: center; }
.url { margin-left: 15px; font-size: 27px; letter-spacing: -.3px; color: #54575b; white-space: nowrap; }
.url b { font-weight: normal; color: #1f1f1f; }
.star { margin-left: auto; }
.puzzle { margin-left: 37px; }
.tool-sep { width: 3px; height: 32px; margin-left: 35px; background: #c9dcfa; }
.avatar { width: 40px; height: 40px; margin-left: 32px; border-radius: 20px; background: #8a6d61; color: #fff; font-size: 20px; line-height: 40px; text-align: center; }
.update { width: 221px; height: 68px; margin-left: auto; border-radius: 34px; background: #d5e2fb; color: #0b2357; display: flex; align-items: center; justify-content: space-between; padding: 0 28px 0 24px; font-size: 23px; letter-spacing: -.4px; white-space: nowrap; }

/* page */
.page { flex: 1; position: relative; background: #fff; padding: 0 48px 0 64px; font-size: 28px; }
h1, h2, h3 { margin: 0; }
.head { height: 140px; padding: 46px 6px 0 0; border-bottom: 3px solid #cfcfcf; display: flex; justify-content: space-between; }
h1 { font-size: 48px; line-height: 57px; }
.logo { margin-top: -1px; overflow: visible; }
.order { height: 60px; margin-top: 37px; display: flex; justify-content: space-between; align-items: center; }
h2 { font-size: 48px; font-weight: normal; line-height: 60px; padding-top: 1px; letter-spacing: .05px; }
.btn { height: 60px; border: 0; border-radius: 8px; padding: 1px 0 0; background: #da2622; color: #fff; font: 28px "Liberation Sans", Arial, sans-serif; display: flex; align-items: center; justify-content: center; }
.btn-outline { width: 180px; border: 3px solid #3b6fe0; }
.btn-upload { gap: 13px; }
.btn-edit { gap: 12px; }
.licenses { display: flex; gap: 20px; margin-top: 30px; }
.field { width: 300px; height: 60px; border: 4px solid #16269a; border-radius: 10px; background: #f4f7f5; padding-left: 11px; font-size: 19.600px; line-height: 52px; color: #000; }
.field-empty { color: #85888a; font-size: 20px; }
.route { height: 196px; margin-top: 20px; border: 2px solid #e1e4e8; border-radius: 10px; padding: 35px 0 0 16px; font-size: 32px; }
.stop { display: flex; height: 38px; line-height: 40px; gap: 22px; }
.route-line { width: 3px; height: 30px; margin: 10px 0 6px 23px; background: #6f86c0; }
.stop-to { line-height: 32px; }
.tours { height: 1015px; border: 2px solid #dee2e6; border-top-color: #d0d4d8; border-radius: 10px; font-size: 32px; }
.tour-head { height: 123px; background: #f3f6f4; border-bottom: 2px solid #dee2e6; display: flex; align-items: center; padding: 0 41px 1px 27px; border-radius: 8px 8px 0 0; }
.tour-head > span { margin-top: -2px; }
.steps { display: flex; align-items: center; margin: 0 16px 0 16px; }
.dot { width: 40px; height: 40px; border-radius: 50%; background: #b9b9b6; }
.dot-run { background: #5ecb60; }
.dot-wait { background: #f9b335; }
.bar { width: 40px; height: 5px; background: #000; }
.chev { margin-left: auto; }
h3 { height: 87px; padding: 0 0 0 16px; font-size: 40px; font-weight: normal; line-height: 86px; }
.details { height: 385px; border: 2px solid #dee2e6; border-radius: 10px; }
.details-head { height: 82px; background: #f3f6f4; border-bottom: 2px solid #dee2e6; border-radius: 8px 8px 0 0; display: flex; align-items: center; padding: 0 41px 1px 50px; }
.details-body { display: flex; height: 300px; }
.address { width: 371px; font-size: 28px; line-height: 40px; padding: 0; margin-top: -1px; }
.locate { flex: 1; display: flex; justify-content: center; align-items: center; }

/* map */
.tile path { vector-effect: non-scaling-stroke; fill: none; stroke-linejoin: round; }
.tile .wood { fill: #d5efdb; }
.tile .town { fill: #edf1f4; }
.tile .indus { fill: #e2e5ee; }
.tile .mauve { fill: #dfddec; }
.tile .water { fill: #7bb5e0; }
.brook { stroke: #8ac0e6; stroke-width: 2.800; }
.road { stroke: #b2b7d4; stroke-width: 5.500; }
.road-mid { stroke-width: 3.500; }
.road-thin { stroke: #c2c6d2; stroke-width: 2.500; }
.highway { stroke: #959ebd; stroke-width: 6; }
.rail { stroke: #c2c4cc; stroke-width: 2; }
.dashed { stroke-dasharray: 9 4; }
.label { font-family: "Open Sans", "Noto Sans", sans-serif; fill: #4f5157; font-weight: 600; }
.label text { paint-order: stroke; stroke: #f6f6f9; stroke-width: 2px; stroke-opacity: .7; }
.label-grey { fill: #8e9199; font-weight: 500; }
.label-green { fill: #4f8068; }
.label-blue { fill: #3d73ac; }
.shield rect { fill: #f3e6a2; stroke: #8c8461; stroke-width: 3; }
.shield text { font: 600 18px "Open Sans", sans-serif; fill: #555; text-anchor: middle; }

/* tasks */
.tasks { height: 291px; padding-top: 11px; }
.task { height: 96px; display: grid; grid-template-columns: 1501px 1fr 169px; padding: 0 15px; font-size: 28px; }
.task-name { height: 76px; display: flex; flex-direction: column; justify-content: center; line-height: 40px; }
.task-actions { display: flex; gap: 6px; }
.icon-btn { width: 68px; height: 76px; border-radius: 8px; background: #dee0e4; box-shadow: 0 4px 8px rgba(0,0,0,.16); display: flex; align-items: center; justify-content: center; }
.btn-next { width: 170px; height: 56px; margin-top: 11px; }
.tour-last { border-bottom: 0; border-top: 3px solid #d0d4d8; border-radius: 0 0 8px 8px; height: 123px; }
.foot { position: absolute; left: 0; right: 0; top: 1784px; border-top: 3px solid #cfcfcf; text-align: center; padding-top: 27px; }
.copy { font-size: 19.200px; line-height: 36px; }
.version { font-size: 22px; line-height: 32px; }

/* delay dialog */
.backdrop { position: absolute; inset: 0; background: rgba(0,0,0,.5); }
.dialog { position: absolute; left: 1802px; top: 1159px; width: 1000px; height: 214px; background: #fff; border-radius: 10px; box-shadow: 0 2px 18px rgba(0,0,0,.45); }
.dialog-head { height: 85px; background: #f3f5f5; border-bottom: 2px solid #dee2e6; border-radius: 10px 10px 0 0; display: flex; justify-content: space-between; align-items: center; padding: 0 46px 1px 28px; font-size: 32px; font-weight: bold; color: #16191d; }
.dialog-head svg { color: #55585c; }
.dialog-body { padding: 42px 26px 0 26px; }
.combo { height: 60px; border: 2px solid #86aef5; border-radius: 6px; box-shadow: 0 0 0 3px #c6dafb; display: flex; justify-content: flex-end; }
.combo-arrow { width: 59px; border-left: 2px solid #86aef5; display: flex; align-items: center; justify-content: center; padding-top: 2px; }
.options { position: absolute; left: 27px; top: 192px; width: 946px; height: 401px; background: #fff; border: 3px solid #dee2e6; border-radius: 0 0 8px 8px; box-shadow: 0 8px 22px rgba(0,0,0,.35); overflow: hidden; color: #2b2e33; }
.options div { height: 60px; line-height: 56px; padding-left: 14px; white-space: nowrap; }
.thumb { position: absolute; right: 0; top: 1px; width: 7px; height: 372px; border-radius: 4px; background: #8a8a8a; }

/* taskbar */
.taskbar { height: 82px; background: #010206; display: flex; color: #fff; font-family: "Open Sans", "Noto Sans", sans-serif; }
.app { width: 96px; height: 81px; display: flex; align-items: center; justify-content: center; padding-top: 1px; }
.app:first-child { width: 97px; }
.app-folder { margin-left: 6px; }
.app-fox { width: 98px; margin-left: 1px; }
.app-active { background: #343639; border-bottom: 5px solid #86b7ec; padding-top: 5px; }
.app-vs { width: 80px; margin-left: 10px; border-bottom: 5px solid #86b7ec; padding-top: 5px; }
.tray { margin-left: auto; display: flex; align-items: center; font-size: 24px; padding-right: 9px; }
.tr-net { margin-left: 18px; }
.tr-vol { margin-left: 14px; }
.lang { margin-left: 21px; width: 44px; letter-spacing: -1.200px; margin-top: -2px; }
.clock { width: 108px; margin-left: 25px; display: flex; flex-direction: column; align-items: center; line-height: 36px; letter-spacing: -1.600px; white-space: nowrap; margin-top: -2px; }
.tr-note { margin-left: 36px; }
.desk { width: 2px; height: 82px; margin-left: 39px; background: #5a5c60; }
```
